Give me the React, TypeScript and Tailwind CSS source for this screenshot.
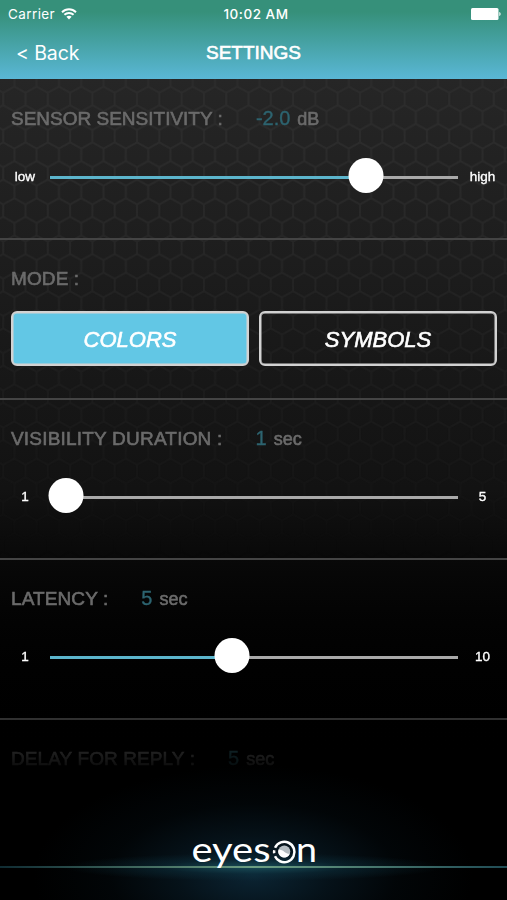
import React, { useState } from 'react';

interface SliderProps {
  min: string;
  max: string;
  // position of the thumb centre along the track, 0 - 1
  position: number;
  onChange: (position: number) => void;
}

const Slider: React.FC<SliderProps> = ({ min, max, position, onChange }) => {
  const thumbCenter = `calc(16px + (100% - 32px) * ${position})`;

  const handleClick = (e: React.MouseEvent<HTMLDivElement>) => {
    const rect = e.currentTarget.getBoundingClientRect();
    const next = (e.clientX - rect.left - 16) / (rect.width - 32);
    onChange(Math.min(1, Math.max(0, next)));
  };

  return (
    <div className="flex h-[35px] items-center text-[13.5px] text-white [-webkit-text-stroke:0.35px]">
      <span className="w-[50px] pt-[3px] text-center">{min}</span>
      <div className="relative flex h-full flex-1 cursor-pointer items-center pt-[3px]" onClick={handleClick}>
        <div className="h-[3px] w-full overflow-hidden bg-[#a9a9a9]">
          <div className="h-full bg-[#5cb5cc]" style={{ width: thumbCenter }} />
        </div>
        <div className="absolute top-0 size-[35px] -translate-x-1/2 rounded-full bg-white" style={{ left: thumbCenter }} />
      </div>
      <span className="w-[49px] pt-[3px] text-center">{max}</span>
    </div>
  );
};

interface SectionProps {
  title: string;
  titleClass?: string;
  value?: string;
  unit?: string;
  children?: React.ReactNode;
}

const Section: React.FC<SectionProps> = ({ title, titleClass = 'tracking-[0.1px]', value, unit, children }) => (
  <section className="flex h-[160px] shrink-0 flex-col border-b-2 border-[#444] pt-[27px]">
    <h2 className="flex h-[24px] items-baseline pl-[11px] text-[19px] leading-[24px] text-[#6b6b6b] [-webkit-text-stroke:0.6px]">
      <span className={titleClass}>{title} :</span>
      {value && <span className="ml-[33px] text-[20px] leading-none text-[#2d6470] [-webkit-text-stroke:0.35px]">{value}</span>}
      {unit && <span className="ml-[7px] text-[18px] leading-none">{unit}</span>}
    </h2>
    {children}
  </section>
);

const ModeButton: React.FC<{ label: string; active: boolean; onClick: () => void }> = ({ label, active, onClick }) => (
  <button
    onClick={onClick}
    className={`h-[55px] flex-1 rounded-md border-[2.5px] border-[#d2d2d2] pt-[2px] text-[22px] text-white italic shadow-[inset_0_0_0_0.5px_#d2d2d2] [-webkit-text-stroke:0.6px] ${active ? 'bg-[#62c7e5]' : 'bg-transparent'}`}
  >
    {label}
  </button>
);

const HexBackground = () => (
  <svg className="absolute inset-0 h-[480px] w-full mask-[linear-gradient(#000_10%,#0006_50%,transparent)]">
    <defs>
      <pattern id="hex" width="22.3" height="37.2" x="3.2" y="1.4" patternUnits="userSpaceOnUse">
        <path
          d="M11.15 6.2 22.3 12.4V24.8L11.15 31 0 24.8V12.4ZM11.15 6.2V-6.2M11.15 31V43.4"
          fill="none"
          stroke="#2c2c2c"
          strokeWidth="2"
        />
      </pattern>
    </defs>
    <rect width="100%" height="100%" fill="url(#hex)" />
  </svg>
);

const WifiIcon = () => (
  <svg width="16" height="12" viewBox="0 0 16 12" fill="none" stroke="#fff" strokeWidth="1.9">
    <path d="M1 4.2C5 .3 11 .3 15 4.2" />
    <path d="M3.4 6.8C6 4.3 10 4.3 12.6 6.8" />
    <path d="M8 11.4 5.4 8.7C6.9 7.4 9.1 7.4 10.6 8.7Z" fill="#fff" stroke="none" />
  </svg>
);

const BatteryIcon = () => (
  <svg width="30" height="12" viewBox="0 0 30 12" fill="#fff">
    <rect x="0" y="0" width="27.5" height="12" rx="1.5" />
    <path d="M28.3 4C30 4.4 30 7.6 28.3 8Z" />
  </svg>
);

const Logo = () => (
  <svg width="127" height="48" viewBox="0 0 127 48" fill="#fff" className="overflow-visible font-['Lato',sans-serif]">
    <text x="1.5" y="33.5" fontSize="34.5" textLength="79" lengthAdjust="spacingAndGlyphs">eyes</text>
    <circle cx="94.3" cy="24" r="10.2" fill="none" stroke="#fff" strokeWidth="2.5" strokeDasharray="55 3 3 3.1" transform="rotate(205 94.3 24)" />
    <circle cx="94.3" cy="23.5" r="6" fill="#b4bcc1" />
    <path d="M88.5 21.5A6 6 0 1 0 99.9 25.5C95.5 27 94.5 21.5 88.5 21.5Z" />
    <text x="106" y="33.5" fontSize="34.5" textLength="21" lengthAdjust="spacingAndGlyphs">n</text>
  </svg>
);

export default function App() {
  const [sensitivity, setSensitivity] = useState(0.799);
  const [duration, setDuration] = useState(0);
  const [latency, setLatency] = useState(0.442);
  const [mode, setMode] = useState('COLORS');

  return (
    <div className="relative flex h-[900px] w-[507px] flex-col overflow-hidden bg-black font-['Liberation_Sans',Arial,sans-serif]">
      <header className="flex h-[79px] flex-col bg-linear-to-b from-[#36907a] from-15% to-[#5ab7d6] text-white">
        <div className="grid h-[28px] grid-cols-3 items-center pr-[6px] pl-[8px] font-[Inter,sans-serif] text-[13.5px]">
          <span className="flex items-center gap-[6px] tracking-[0.4px]">
            Carrier <WifiIcon />
          </span>
          <span className="pl-[3px] text-center font-medium tracking-[0.5px] whitespace-nowrap">10:02 AM</span>
          <span className="flex justify-end">
            <BatteryIcon />
          </span>
        </div>
        <div className="grid h-[50px] grid-cols-[1fr_auto_1fr] items-center">
          <button className="pt-px pl-[16px] text-left font-[Inter,sans-serif] text-[19.5px] tracking-[-0.1px]">&lt; Back</button>
          <h1 className="pt-px text-[19px] [-webkit-text-stroke:0.6px]">SETTINGS</h1>
        </div>
      </header>

      <main className="relative flex h-[821px] flex-col bg-linear-to-b from-[#262626] via-[#121212] via-50% to-black to-85% pt-px">
        <HexBackground />
        <div className="relative flex h-[700px] flex-col overflow-hidden mask-[linear-gradient(#000_88%,transparent_99.5%)]">
          <Section title="SENSOR SENSITIVITY" titleClass="tracking-normal" value="-2.0" unit="dB">
            <div className="pt-[27px]">
              <Slider min="low" max="high" position={sensitivity} onChange={setSensitivity} />
            </div>
          </Section>
          <Section title="MODE">
            <div className="flex gap-[10px] pt-[20px] pr-[10px] pl-[11px]">
              <ModeButton label="COLORS" active={mode === 'COLORS'} onClick={() => setMode('COLORS')} />
              <ModeButton label="SYMBOLS" active={mode === 'SYMBOLS'} onClick={() => setMode('SYMBOLS')} />
            </div>
          </Section>
          <Section title="VISIBILITY DURATION" titleClass="tracking-[0.2px]" value="1" unit="sec">
            <div className="pt-[27px]">
              <Slider min="1" max="5" position={duration} onChange={setDuration} />
            </div>
          </Section>
          <Section title="LATENCY" value="5" unit="sec">
            <div className="pt-[27px]">
              <Slider min="1" max="10" position={latency} onChange={setLatency} />
            </div>
          </Section>
          <Section title="DELAY FOR REPLY" value="5" unit="sec" />
        </div>
      </main>

      <footer className="absolute inset-x-0 bottom-0 flex h-[140px] justify-center overflow-hidden">
        <div className="absolute inset-0 bg-[radial-gradient(ellipse_220px_110px_at_50%_115px,#0b2433_0%,#07161fcc_35%,#030a0e88_65%,transparent_100%)]" />
        <div className="absolute inset-x-0 top-[92px] h-[30px] bg-[radial-gradient(ellipse_190px_14px_at_50%_15px,#1c5560cc_0%,#0e364466_50%,transparent_100%)]" />
        <div className="absolute inset-x-0 top-[106px] h-[1.5px] bg-linear-to-r from-[#102c33] via-[#6d9f83] to-[#204c55]" />
        <div className="relative pt-[68px]">
          <Logo />
        </div>
      </footer>
    </div>
  );
}
